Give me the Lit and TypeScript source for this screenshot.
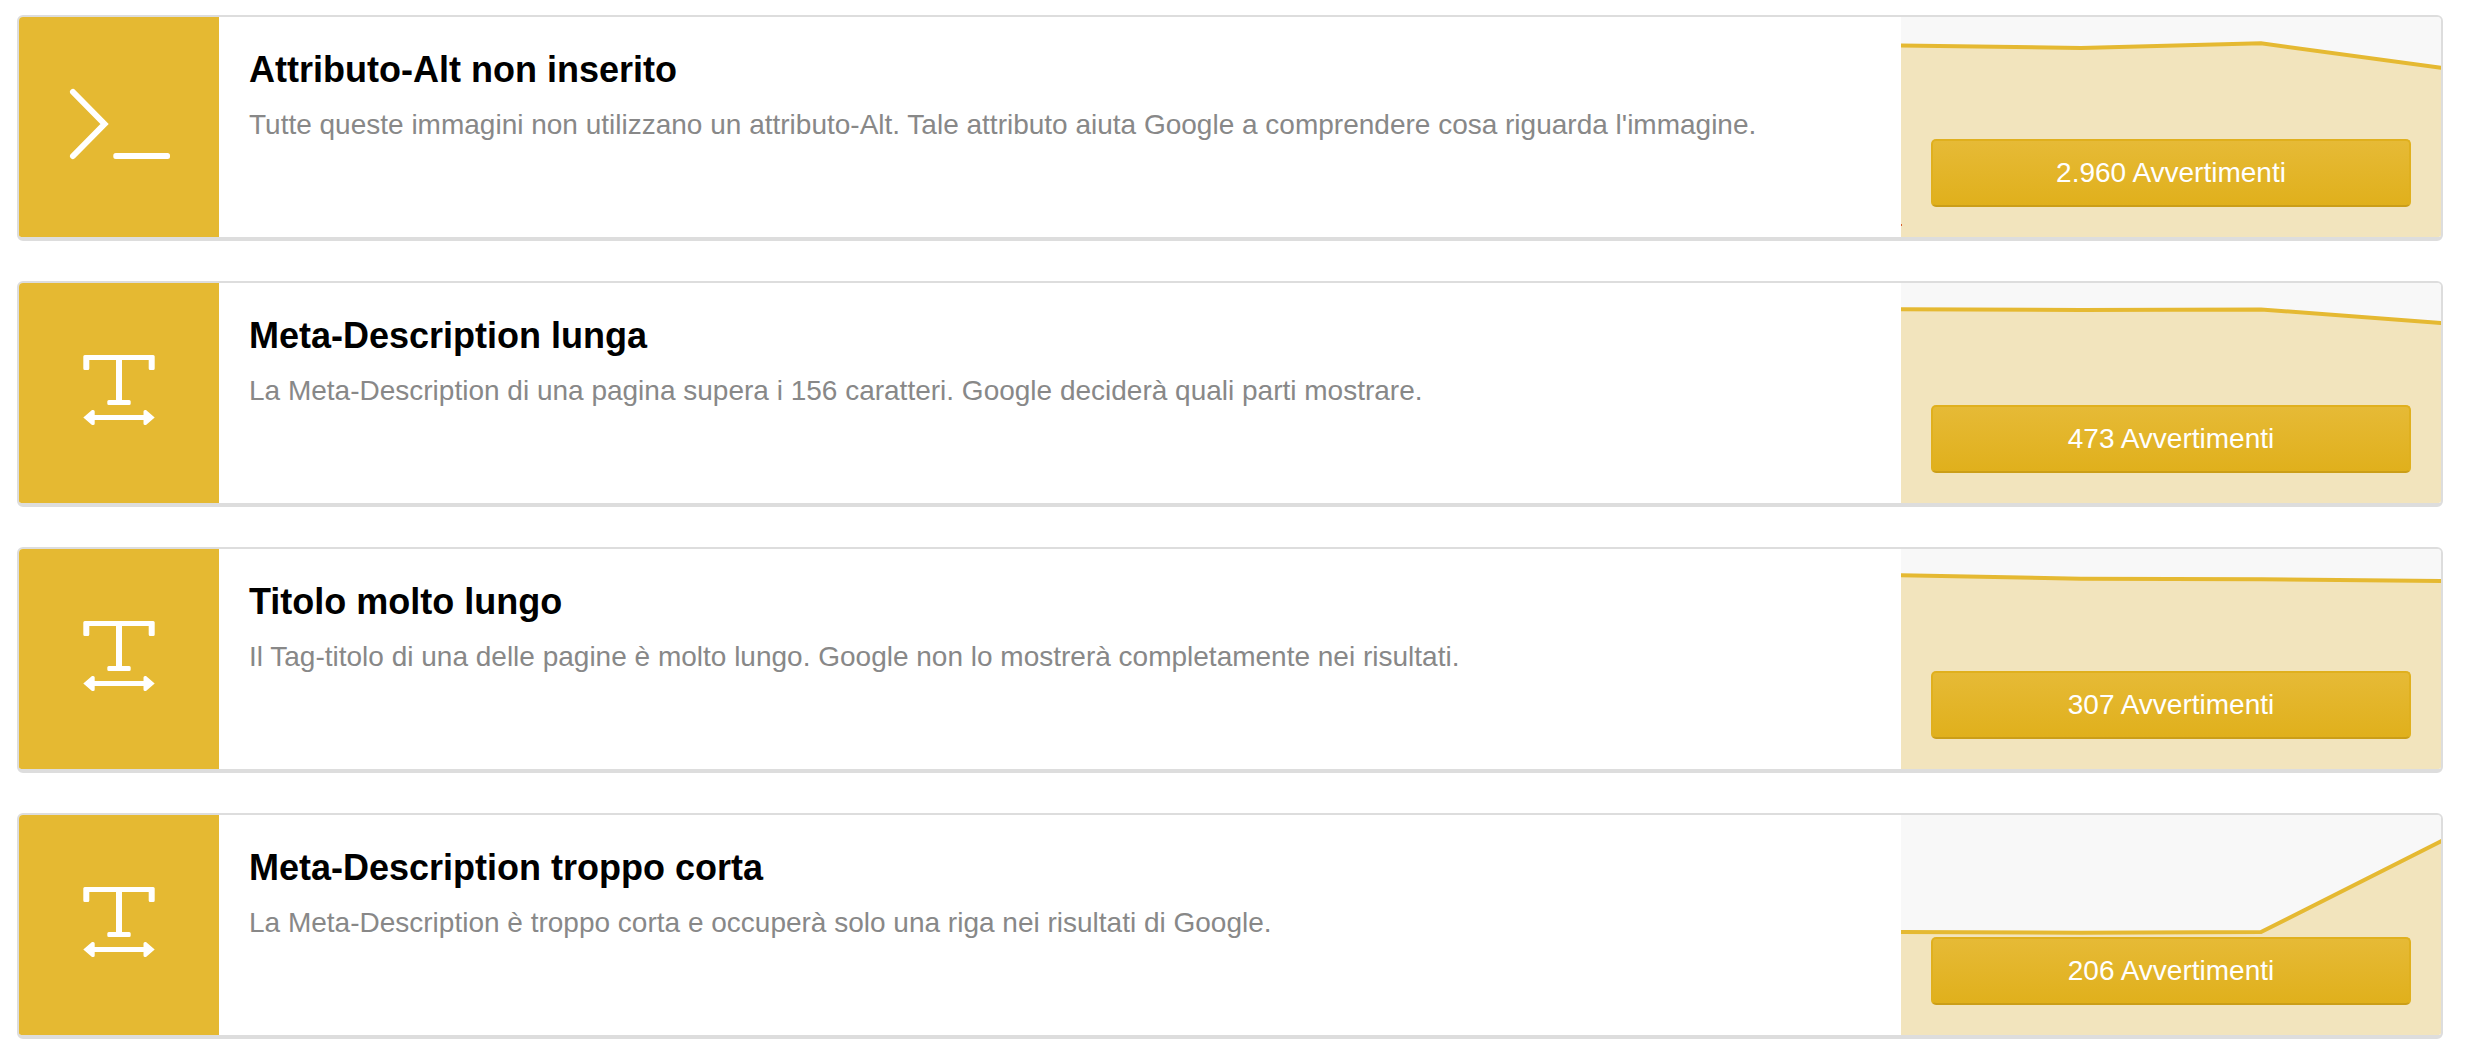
import { LitElement, html, css, svg } from "lit";
import { customElement, property } from "lit/decorators.js";

interface Issue {
  icon: "terminal" | "text-width";
  title: string;
  description: string;
  count: string;
  trend: number[];
  marker?: number;
}

const CHART_WIDTH = 540;
const CHART_HEIGHT = 220;

const issues: Issue[] = [
  {
    icon: "terminal",
    title: "Attributo-Alt non inserito",
    description:
      "Tutte queste immagini non utilizzano un attributo-Alt. Tale attributo aiuta Google a comprendere cosa riguarda l'immagine.",
    count: "2.960",
    trend: [28.5, 31, 26.3, 50.7],
    marker: 207,
  },
  {
    icon: "text-width",
    title: "Meta-Description lunga",
    description:
      "La Meta-Description di una pagina supera i 156 caratteri. Google deciderà quali parti mostrare.",
    count: "473",
    trend: [26.3, 26.9, 26.4, 40],
  },
  {
    icon: "text-width",
    title: "Titolo molto lungo",
    description:
      "Il Tag-titolo di una delle pagine è molto lungo. Google non lo mostrerà completamente nei risultati.",
    count: "307",
    trend: [26.3, 29.7, 30.2, 32],
  },
  {
    icon: "text-width",
    title: "Meta-Description troppo corta",
    description:
      "La Meta-Description è troppo corta e occuperà solo una riga nei risultati di Google.",
    count: "206",
    trend: [117, 117.8, 117, 26.3],
  },
];

const icons = {
  terminal: svg`
    <path class="stroke" d="M14 25 L45.5 57 L14 89" />
    <rect x="54.3" y="86" width="56.7" height="6" rx="2.5" />`,
  "text-width": svg`
    <path d="M25.8 22 H94.2 Q95.7 22 95.7 23.5 V35.5 Q95.7 37 94.2 37 H91.2 Q89.7 37 89.7 35.5 V27 H63 V67 H70.2 Q71.7 67 71.7 68.5 V70.5 Q71.7 72 70.2 72 H49.8 Q48.3 72 48.3 70.5 V68.5 Q48.3 67 49.8 67 H57 V27 H30.3 V35.5 Q30.3 37 28.8 37 H25.8 Q24.3 37 24.3 35.5 V23.5 Q24.3 22 25.8 22 Z" />
    <path d="M24.3 84.5 L33 77 H34.2 Q35.7 77 35.7 78.5 V82 H84.5 V78.5 Q84.5 77 86 77 H87 L95.7 84.5 L87 92 H86 Q84.5 92 84.5 90.5 V87 H35.7 V90.5 Q35.7 92 34.2 92 H33 Z" />`,
};

@customElement("trend-chart")
export class TrendChart extends LitElement {
  @property({ attribute: false }) values: number[] = [];
  @property({ attribute: false }) marker?: number;

  static styles = css`
    :host {
      display: block;
    }
    .chart {
      display: block;
      width: 100%;
      height: 100%;
    }
    .area {
      fill: #f2e4bd;
    }
    .line {
      fill: none;
      stroke: #e5b932;
      stroke-width: 4;
      vector-effect: non-scaling-stroke;
    }
    .marker {
      fill: #d9622f;
    }
  `;

  render() {
    const step = CHART_WIDTH / (this.values.length - 1);
    const points = this.values.map((y, i) => `${i * step},${y}`).join(" L");
    const last = this.values[this.values.length - 1];
    const previous = this.values[this.values.length - 2];
    const first = this.values[0];
    // The line runs slightly past both edges so that its ends are cut vertically.
    const overrun = 4;
    const tail = last + ((last - previous) * overrun) / step;
    return html`
      <svg
        class="chart"
        viewBox="0 0 ${CHART_WIDTH} ${CHART_HEIGHT}"
        preserveAspectRatio="none"
        aria-hidden="true"
      >
        <path class="area" d="M${points} V${CHART_HEIGHT} H0 Z" />
        <path class="line" d="M${-overrun},${first} L${points} L${CHART_WIDTH + overrun},${tail}" />
        ${this.marker === undefined
          ? null
          : svg`<rect class="marker" x="0" y=${this.marker} width="1" height="2" />`}
      </svg>
    `;
  }
}

@customElement("issue-card")
export class IssueCard extends LitElement {
  @property({ attribute: false }) issue!: Issue;

  static styles = css`
    :host {
      display: block;
    }
    .card {
      display: grid;
      grid-template-columns: 200px minmax(0, 1fr) minmax(0, 540px);
      min-height: 220px;
      border: 2px solid #dddddd;
      border-bottom-width: 4px;
      border-radius: 6px;
      overflow: hidden;
      background: #ffffff;
    }
    .badge {
      display: grid;
      place-items: center;
      background: #e5b932;
    }
    .icon {
      width: 120px;
      height: 120px;
      fill: #ffffff;
    }
    .stroke {
      fill: none;
      stroke: #ffffff;
      stroke-width: 6;
      stroke-linecap: round;
      stroke-linejoin: miter;
    }
    .text {
      padding: 30px;
    }
    .title {
      margin: 0;
      font-size: 36px;
      line-height: 46px;
      font-weight: 700;
      color: #000000;
    }
    .description {
      margin: 12px 0 0;
      font-size: 28px;
      line-height: 40px;
      color: #888888;
    }
    .trend {
      display: grid;
      background: #f8f8f8;
    }
    .trend > * {
      grid-area: 1 / 1;
    }
    .action {
      align-self: end;
      height: 68px;
      margin: 30px;
      padding: 0 20px;
      border: 2px solid #e0b01e;
      border-bottom-color: #cb9e18;
      border-radius: 5px;
      background: linear-gradient(#e6ba36, #e0b01c);
      color: #ffffff;
      font: inherit;
      font-size: 28px;
      z-index: 1;
      cursor: pointer;
    }
  `;

  render() {
    const { icon, title, description, count, trend, marker } = this.issue;
    return html`
      <article class="card">
        <div class="badge">
          <svg class="icon" viewBox="0 0 120 120" aria-hidden="true">${icons[icon]}</svg>
        </div>
        <div class="text">
          <h2 class="title">${title}</h2>
          <p class="description">${description}</p>
        </div>
        <div class="trend">
          <trend-chart .values=${trend} .marker=${marker}></trend-chart>
          <button class="action" type="button">${count} Avvertimenti</button>
        </div>
      </article>
    `;
  }
}

@customElement("app-root")
export class AppRoot extends LitElement {
  static styles = css`
    :host {
      display: block;
      background: #ffffff;
      font-family: "Liberation Sans", Arial, Helvetica, sans-serif;
    }
    .list {
      display: flex;
      flex-direction: column;
      gap: 40px;
      padding: 15px 22px 19px 17px;
    }
  `;

  render() {
    return html`
      <main class="list">
        ${issues.map((issue) => html`<issue-card .issue=${issue}></issue-card>`)}
      </main>
    `;
  }
}
